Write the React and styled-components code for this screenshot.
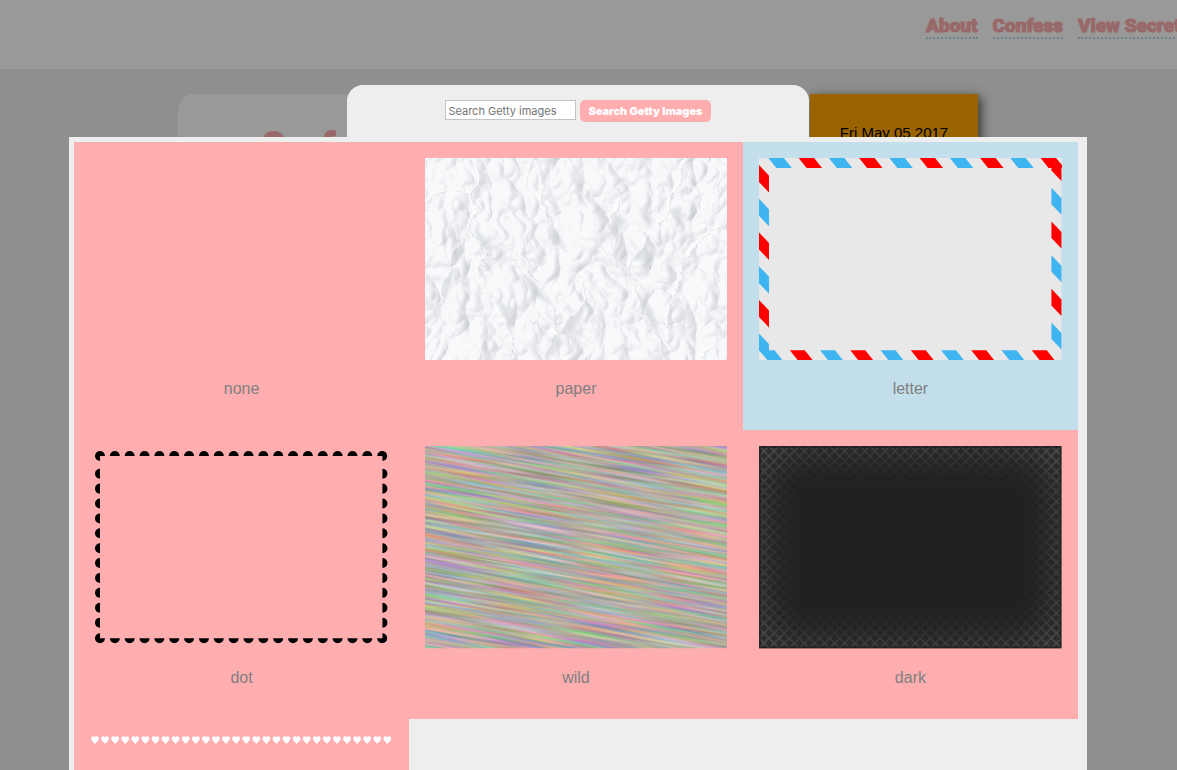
import React from "react";
import styled, { createGlobalStyle } from "styled-components";

const sans = `"Liberation Sans", Arial, sans-serif`;
const ui = `Inter, "Noto Sans", sans-serif`;
const display = `Roboto, "Liberation Sans", sans-serif`;
const pink = "#ffaeb0";

const GlobalStyle = createGlobalStyle`
  *, *::before, *::after { box-sizing: border-box; }
  html, body { margin: 0; min-height: 100%; }
  body { background: #eee; font: 16px/20px ${sans}; overflow: hidden; }
`;

const Header = styled.header`
  display: flex;
  height: 69px;
  padding-top: 15px;
  background: #fff;
  overflow: hidden;
`;

const Nav = styled.nav`
  display: flex;
  align-items: flex-start;
  gap: 15px;
  width: 251px;
  margin-left: auto;
  white-space: nowrap;
`;

const NavLink = styled.a`
  flex: none;
  font: 900 19px/22px ${display};
  color: ${pink};
  -webkit-text-stroke: 1px ${pink};
  text-decoration: none;
  border-bottom: 2px dotted #add8e6;
`;

const Main = styled.main`
  padding: 25px 21px 0 0;
`;

const Columns = styled.div`
  display: flex;
  gap: 16px;
  max-width: 800px;
  min-height: 600px;
  margin: 0 auto;
`;

const Card = styled.section`
  flex: 1;
  padding: 30px 84px;
  background: #fff;
  border-radius: 16px;
`;

const CardTitle = styled.h1`
  margin: 0;
  font: 900 34px/40px ${display};
  color: ${pink};
  -webkit-text-stroke: 2px ${pink};
`;

const Secret = styled.aside`
  width: 168px;
  padding-top: 29px;
  background: #ffa500;
  box-shadow: 3px 3px 10px #555;
  text-align: center;
  font-size: 15px;
  color: #000;
`;

const Overlay = styled.div`
  position: fixed;
  inset: 0;
  display: flex;
  flex-direction: column;
  align-items: center;
  padding: 85px 21px 0 0;
  background: rgba(0, 0, 0, 0.4);
  overflow: hidden;
`;

const SearchForm = styled.form`
  display: flex;
  flex: none;
  justify-content: center;
  align-items: flex-start;
  gap: 4px;
  width: 40%;
  height: 52px;
  padding-top: 15px;
  background: #eee;
  border-radius: 16px 16px 0 0;
`;

const SearchInput = styled.input`
  width: 131px;
  height: 20px;
  padding: 1px 2px 0;
  border: 1px solid #c4c4c4;
  border-radius: 0;
  background: #fff;
  font: 11px/16px ${ui};
  &::placeholder { color: #757575; opacity: 1; }
`;

const SearchButton = styled.button`
  height: 22px;
  padding: 0 8px;
  border: 0;
  border-radius: 5px;
  background: ${pink};
  color: #fff;
  font: 900 11px/16px ${ui};
  white-space: nowrap;
`;

const Gallery = styled.div`
  display: grid;
  flex: none;
  grid-template-columns: repeat(3, 1fr);
  width: 88%;
  padding: 5px 9px 5px 5px;
  background: #eee;
`;

const Tile = styled.figure`
  margin: 0;
  padding: 16px 16px 29px;
  background: ${(p) => (p.$selected ? "#c3dfeb" : pink)};
`;

const Swatch = styled.div`
  aspect-ratio: 302 / 202;
  svg { display: block; width: 100%; height: 100%; }
`;

const Caption = styled.figcaption`
  padding-top: 17px;
  line-height: 24px;
  text-align: center;
  color: #808080;
`;

const range = (n) => Array.from({ length: n }, (_, i) => i);
const Drawing = ({ children }) => (
  <svg viewBox="0 0 303 202" preserveAspectRatio="none" aria-hidden="true">{children}</svg>
);

const folds = [
  "M53 0L54 22L49 36L52 55L45 68L52 84L66 98",
  "M111 0L101 28M111 0L118 24L119 44L125 66L126 84L142 92",
  "M45 68L30 96L27 110L18 128L17 148",
  "M66 98L54 106L57 124L70 140L78 155L88 180L91 202",
  "M263 2L257 12L258 23L250 34L245 52L234 68",
  "M188 22L197 40L189 55L184 72",
  "M225 75L224 84L208 102L205 112L186 96L171 84",
  "M205 112L212 132L222 160L236 182L244 202",
  "M258 105L256 126L243 158L245 188",
  "M303 62L275 82L259 103",
  "M148 113L160 124L163 142L132 176L120 202",
  "M132 176L130 150L104 112L99 94",
  "M275 202L292 186M0 46L12 36L26 32L49 36",
  "M268 26L274 38L277 52L291 44",
];
const shades = [
  "M125 66L135 78L142 92L126 84z",
  "M27 110L18 128L17 148L24 132L29 112z",
  "M53 84L66 98L68 88L49 68z",
  "M224 84L222 102L208 102L214 90z",
  "M212 132L222 160L236 182L228 152z",
  "M245 52L258 72L256 48z",
  "M163 142L132 176L148 176z",
  "M130 150L110 124L99 116L106 134z",
  "M54 0L56 22L49 36L62 26z",
  "M259 103L258 105L256 126L262 106z",
  "M120 202L124 180L132 176L140 184z",
  "M78 155L72 140L84 150L88 180z",
  "M189 55L202 62L186 84z",
];

function Paper() {
  return (
    <Drawing>
      <filter id="crumple" x="0" y="0" width="100%" height="100%" colorInterpolationFilters="sRGB">
        <feTurbulence type="turbulence" baseFrequency="0.022 0.018" numOctaves="3" seed="31" result="n" />
        <feColorMatrix in="n" values="0 0 0 0 0  0 0 0 0 0  0 0 0 0 0  1 0 0 0 0" result="h" />
        <feDiffuseLighting in="h" surfaceScale="11" diffuseConstant="1.1" lightingColor="#fff" result="l">
          <feDistantLight azimuth="205" elevation="64" />
        </feDiffuseLighting>
        <feColorMatrix in="l" values="0.2 0 0 0 0.77  0 0.195 0 0 0.78  0 0 0.17 0 0.81  0 0 0 1 0" />
      </filter>
      <filter id="smudge" x="-20%" y="-20%" width="140%" height="140%"><feGaussianBlur stdDeviation="1.5" /></filter>
      <filter id="jagged" x="0" y="0" width="303" height="202" filterUnits="userSpaceOnUse">
        <feTurbulence type="fractalNoise" baseFrequency="0.09" numOctaves="3" seed="4" result="n" />
        <feDisplacementMap in="SourceGraphic" in2="n" scale="11" xChannelSelector="R" yChannelSelector="G" />
      </filter>
      <rect width="303" height="202" fill="#fafafc" filter="url(#crumple)" />
      <g fill="#c9ccd4" fillOpacity="0.5" filter="url(#smudge)">
        {shades.map((d) => <path key={d} d={d} />)}
      </g>
      <g fill="none" filter="url(#jagged)">
        <g stroke="#fff" strokeOpacity="0.45" strokeWidth="4" transform="translate(-2 -1)">
          {folds.map((d) => <path key={d} d={d} />)}
        </g>
        <g stroke="#bfc2ca" strokeOpacity="0.4">
          {folds.map((d) => <path key={d} d={d} />)}
        </g>
      </g>
    </Drawing>
  );
}

const stripe = (i, redFirst) => ((i % 2 === 0) === redFirst ? "#ff0000" : "#3eb5f1");

function Letter() {
  return (
    <Drawing>
      <rect width="303" height="202" fill="#e8e8e8" />
      {range(10).map((i) => {
        const x = 9.4 + i * 30.3;
        return <path key={i} fill={stripe(i, false)} d={`M${x} 0h15.5l8 10h-15.5z`} />;
      })}
      {range(10).map((i) => {
        const x = 0.6 + i * 30.3;
        return <path key={i} fill={stripe(i, false)} d={`M${x} 192h15l8 10h-15z`} />;
      })}
      {range(6).map((i) => {
        const y = 7 + i * 33.67;
        return <path key={i} fill={stripe(i, true)} d={`M0 ${y}v17l10 10.5v-17z`} />;
      })}
      {range(6).map((i) => {
        const y = -4 + i * 33.67;
        return <path key={i} fill={stripe(i, true)} d={`M293 ${y}v16.5l10 10.5v-16.5z`} />;
      })}
    </Drawing>
  );
}

function Dots() {
  const across = range(20).map((i) => 10 + i * 14.88);
  const down = range(11).map((i) => 27.7 + i * 14.87);
  return (
    <Drawing>
      {across.map((x) => (
        <g key={x}>
          <circle cx={x} cy="10" r="5" />
          <circle cx={x} cy="192" r="5" />
        </g>
      ))}
      {down.map((y) => (
        <g key={y}>
          <circle cx="10" cy={y} r="5" />
          <circle cx="293" cy={y} r="5" />
        </g>
      ))}
      <rect x="10" y="10" width="283" height="182" fill={pink} />
    </Drawing>
  );
}

function Wild() {
  return (
    <Drawing>
      <filter id="streaks" x="0" y="0" width="100%" height="100%" colorInterpolationFilters="sRGB">
        <feTurbulence type="fractalNoise" baseFrequency="0.012 0.36" numOctaves="2" seed="7" />
        <feColorMatrix values="0.74 0 0 0 0.33  0 0.52 0 0 0.42  0 0 0.64 0 0.31  0 0 0 0 1" />
      </filter>
      <clipPath id="frame"><rect width="303" height="202" /></clipPath>
      <g clipPath="url(#frame)">
        <g transform="rotate(10)">
          <rect x="-20" y="-60" width="380" height="300" filter="url(#streaks)" />
        </g>
      </g>
    </Drawing>
  );
}

function Dark() {
  return (
    <Drawing>
      <defs>
        <pattern id="weave" width="10.1" height="10.1" patternUnits="userSpaceOnUse">
          <rect width="10.1" height="10.1" fill="#2e2e2e" />
          <path d="M-1 -1L11.1 11.1M-1 11.1L11.1 -1" stroke="#505050" strokeWidth="1.7" />
        </pattern>
        <filter id="soft" x="-30%" y="-30%" width="160%" height="160%"><feGaussianBlur stdDeviation="17" /></filter>
        <mask id="edges" maskUnits="userSpaceOnUse" x="0" y="0" width="303" height="202">
          <rect width="303" height="202" fill="#fff" />
          <rect x="9" y="9" width="285" height="184" rx="30" fill="#000" filter="url(#soft)" />
        </mask>
      </defs>
      <rect width="303" height="202" fill="#212121" />
      <rect width="303" height="202" fill="url(#weave)" mask="url(#edges)" />
      <rect x="1" y="1" width="301" height="200" fill="none" stroke="#1c1c1c" strokeOpacity="0.6" strokeWidth="2" />
    </Drawing>
  );
}

function Hearts() {
  return (
    <Drawing>
      {range(30).map((i) => (
        <path
          key={i}
          transform={`translate(${1 + i * 10.1} 1)`}
          fill="#fff"
          d="M4 8L.8 4.6C-.2 3.4 0 1.6 .8 .8C1.8 -.2 3.3 -.1 4 1.2C4.7 -.1 6.2 -.2 7.2 .8C8 1.6 8.2 3.4 7.2 4.6z"
        />
      ))}
    </Drawing>
  );
}

const backgrounds = [
  { name: "none" },
  { name: "paper", Art: Paper },
  { name: "letter", Art: Letter, selected: true },
  { name: "dot", Art: Dots },
  { name: "wild", Art: Wild },
  { name: "dark", Art: Dark },
  { Art: Hearts },
];

export default function App() {
  return (
    <>
      <GlobalStyle />
      <Header>
        <Nav>
          <NavLink href="#about">About</NavLink>
          <NavLink href="#confess">Confess</NavLink>
          <NavLink href="#secrets">View Secrets</NavLink>
        </Nav>
      </Header>
      <Main>
        <Columns>
          <Card><CardTitle>Confess</CardTitle></Card>
          <Secret>Fri May 05 2017</Secret>
        </Columns>
      </Main>
      <Overlay>
        <SearchForm onSubmit={(e) => e.preventDefault()}>
          <SearchInput type="text" placeholder="Search Getty images" aria-label="Search Getty images" />
          <SearchButton type="submit">Search Getty Images</SearchButton>
        </SearchForm>
        <Gallery>
          {backgrounds.map(({ name, Art, selected }, i) => (
            <Tile key={i} $selected={selected}>
              <Swatch>{Art && <Art />}</Swatch>
              {name && <Caption>{name}</Caption>}
            </Tile>
          ))}
        </Gallery>
      </Overlay>
    </>
  );
}
